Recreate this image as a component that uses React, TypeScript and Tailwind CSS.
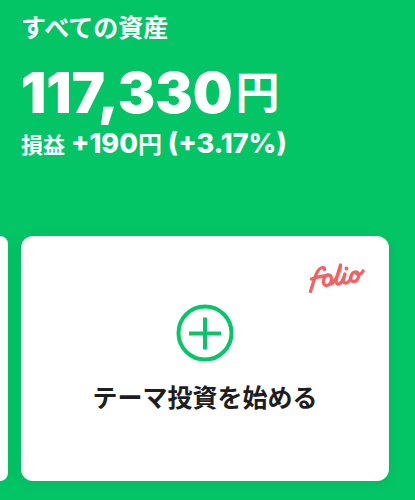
function FolioLogo() {
  return (
    <svg
      viewBox="0 0 57 32"
      className="h-8 w-[57px]"
      fill="none"
      stroke="#f46161"
      strokeWidth="3.300"
      strokeLinecap="round"
      strokeLinejoin="round"
      role="img"
      aria-label="folio"
    >
      <path d="M2.500 30.500C4.500 24.500 6.500 16 9.500 10.500C12 6 17 5 16.500 8.500" />
      <path d="M3.500 18C7 16.500 11 15.500 16 15" />
      <path d="M20 14C15 14.500 13.500 24.500 18.500 24.500C24 24.500 25.500 13.500 20 14Z" />
      <path d="M23 23C28 20 32.500 9 32.500 4C30.500 10.500 26.500 22 29.500 23C32.500 23.500 35.500 19 37 13C35.500 18 34.500 22 37.500 22C40 22 42 19 43 16.500" />
      <path d="M38.500 7.500V7.600" strokeWidth="3.800" />
      <path d="M48 11C42.500 11 40.500 20.500 45.500 20.500C51 20.500 52.500 11.500 48 11C49 14.500 53 14 55 10" />
    </svg>
  );
}

function PlusCircle() {
  return (
    <svg viewBox="0 0 58 58" className="size-[58px]" fill="none" stroke="#06c768" strokeWidth="4" aria-hidden="true">
      <circle cx="29" cy="29" r="26.500" />
      <path d="M29 13.500V45.500M13 29.500H45" />
    </svg>
  );
}

export default function App() {
  return (
    <main
      lang="ja"
      className="min-h-screen overflow-hidden bg-[#03c566] pt-3 pb-5 font-[Inter,'Noto_Sans_CJK_JP',sans-serif] text-white"
    >
      <header className="px-[21px]">
        <h1 className="text-[25px] leading-8 font-bold">すべての資産</h1>
        <p className="mt-4 flex items-center gap-[3px] text-[56px] leading-[66px] font-black whitespace-nowrap">
          117,330<span className="text-[44px] leading-[66px] font-bold">円</span>
        </p>
        <p className="mt-0.5 text-[27px] leading-8 font-extrabold whitespace-nowrap">
          <span className="text-[22px] font-bold">損益</span> +190<span className="text-2xl font-bold">円</span> (+3.17%)
        </p>
      </header>
      <section className="mt-[75px] flex gap-[13px]" aria-label="投資">
        <div className="w-2 shrink-0 rounded-r-xl bg-white shadow-[0_2px_12px_rgba(0,80,40,0.12)]" />
        <button
          type="button"
          className="mr-[26px] flex h-[245px] min-w-0 flex-1 flex-col items-center rounded-xl bg-white pt-[25px] text-[#1e1e1e] shadow-[0_2px_12px_rgba(0,80,40,0.12)]"
        >
          <span className="mr-6 self-end">
            <FolioLogo />
          </span>
          <span className="mt-[11px]">
            <PlusCircle />
          </span>
          <span className="mt-5 text-[25px] leading-8 font-bold">テーマ投資を始める</span>
        </button>
      </section>
    </main>
  );
}
